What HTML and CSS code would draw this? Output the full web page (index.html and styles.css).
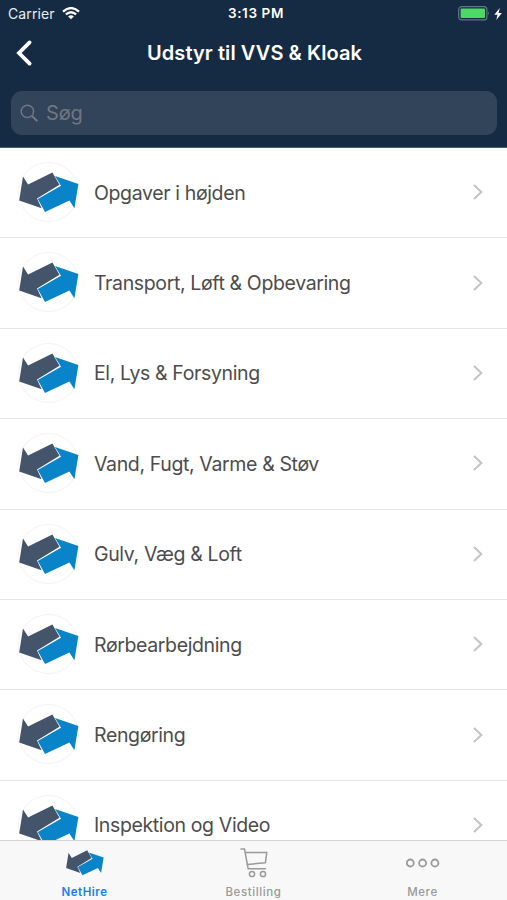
FILE: index.html
```html
<!DOCTYPE html>
<html lang="da">
<head>
<meta charset="utf-8">
<title>Udstyr til VVS &amp; Kloak</title>
<link rel="stylesheet" href="styles.css">
</head>
<body>
<svg class="defs" aria-hidden="true">
  <symbol id="logo" viewBox="18 162 61 60">
    <path fill="#44546a" d="M23 176.4L28.1 184.6L52.4 172.4L59.5 184.8L37 198.4L41.6 208.2L19.2 200.4Z"/>
    <path fill="#0a84c8" d="M55 176L78.4 184L74.4 208.2L69.4 200.4L45 212L37.8 199L61 185.8Z"/>
  </symbol>
  <symbol id="chev" viewBox="0 0 12 18"><path d="M2 2L9.3 9L2 16" fill="none" stroke="#c4c4c8" stroke-width="2"/></symbol>
</svg>
<div class="app">
  <header class="header">
    <div class="status">
      <div class="carrier"><span>Carrier</span>
        <svg class="wifi" viewBox="0 0 18 13"><path d="M1 4.6Q9-2.4 17 4.6M3.9 7.4Q9 3 14.1 7.4" fill="none" stroke="#fff" stroke-width="2.3"/><path d="M9 12.2L6.1 9.4Q9 7.2 11.9 9.4Z" fill="#fff"/></svg>
      </div>
      <div class="time">3:13 PM</div>
      <div class="power">
        <svg class="battery" viewBox="0 0 32 15"><rect x=".7" y=".7" width="28.2" height="13.2" rx="3" fill="none" stroke="#66758a" stroke-width="1.2"/><rect x="2.6" y="2.6" width="24.4" height="9.4" rx="1" fill="#4cd964"/><path d="M30.2 5Q32 7.3 30.2 9.6Z" fill="#66758a"/></svg>
        <svg class="bolt" viewBox="0 0 8 12"><path d="M5.8 0L.3 6.8H3.5L2.3 12L7.8 4.9H4.5Z" fill="#fff"/></svg>
      </div>
    </div>
    <div class="nav">
      <svg class="back" viewBox="0 0 18 28"><path d="M14.6 3.4L4 14L14.6 24.6" fill="none" stroke="#fff" stroke-width="3.8" stroke-linecap="round" stroke-linejoin="miter"/></svg>
      <h1 class="title">Udstyr til VVS &amp; Kloak</h1>
    </div>
    <div class="search">
      <svg class="glass" viewBox="0 0 19 19"><circle cx="7.4" cy="7.4" r="6.2" fill="none" stroke="#717780" stroke-width="1.5"/><path d="M12 12L17.4 17.2" stroke="#717780" stroke-width="2"/></svg>
      <span>Søg</span>
    </div>
  </header>
  <main class="list">
    <div class="row"><div class="avatar"><svg><use href="#logo"/></svg></div><span class="label">Opgaver i højden</span><svg class="chev"><use href="#chev"/></svg></div>
    <div class="row"><div class="avatar"><svg><use href="#logo"/></svg></div><span class="label">Transport, Løft &amp; Opbevaring</span><svg class="chev"><use href="#chev"/></svg></div>
    <div class="row"><div class="avatar"><svg><use href="#logo"/></svg></div><span class="label">El, Lys &amp; Forsyning</span><svg class="chev"><use href="#chev"/></svg></div>
    <div class="row"><div class="avatar"><svg><use href="#logo"/></svg></div><span class="label">Vand, Fugt, Varme &amp; Støv</span><svg class="chev"><use href="#chev"/></svg></div>
    <div class="row"><div class="avatar"><svg><use href="#logo"/></svg></div><span class="label">Gulv, Væg &amp; Loft</span><svg class="chev"><use href="#chev"/></svg></div>
    <div class="row"><div class="avatar"><svg><use href="#logo"/></svg></div><span class="label">Rørbearbejdning</span><svg class="chev"><use href="#chev"/></svg></div>
    <div class="row"><div class="avatar"><svg><use href="#logo"/></svg></div><span class="label">Rengøring</span><svg class="chev"><use href="#chev"/></svg></div>
    <div class="row"><div class="avatar"><svg><use href="#logo"/></svg></div><span class="label">Inspektion og Video</span><svg class="chev"><use href="#chev"/></svg></div>
  </main>
  <nav class="tabs">
    <div class="tab active"><svg class="tab-logo" viewBox="19 172 60 41"><use href="#logo" x="18" y="162" width="61" height="60"/></svg><span>NetHire</span></div>
    <div class="tab"><svg class="cart" viewBox="0 0 28 30"><g fill="none" stroke="#9a9a9a" stroke-width="1.5" stroke-linejoin="round" stroke-linecap="round"><path d="M1 1H4.5L8.2 20.8H25.5M5.4 4.4H26.8L25.4 14.8L7 16.5"/><circle cx="12" cy="26" r="2.6"/><circle cx="23" cy="26" r="2.6"/></g></svg><span>Bestilling</span></div>
    <div class="tab"><svg class="dots" viewBox="0 0 34 30"><g fill="none" stroke="#9a9a9a" stroke-width="1.8"><circle cx="4.3" cy="15" r="3.5"/><circle cx="16.6" cy="15" r="3.5"/><circle cx="28.9" cy="15" r="3.5"/></g></svg><span>Mere</span></div>
  </nav>
</div>
</body>
</html>
```
FILE: styles.css
```css
* { box-sizing: border-box; }
body { margin: 0; font-family: Inter, "Liberation Sans", sans-serif; background: #fff; }
svg { display: block; }
.defs { display: none; }
.app { width: 507px; height: 900px; display: flex; flex-direction: column; overflow: hidden; }
.header { flex: none; height: 148px; background: #152b43; border-bottom: 1px solid #4b5c6d; color: #fff; }
.status { height: 27px; padding: 0 5px 0 8px; display: grid; grid-template-columns: 1fr auto 1fr; align-items: center; font-size: 14px; line-height: 27px; }
.carrier { display: flex; align-items: center; gap: 7px; letter-spacing: .1px; color: #e8edf2; }
.wifi { width: 18px; height: 13px; }
.time { font-weight: 600; font-size: 13.5px; letter-spacing: .6px; padding-left: 2px; }
.power { display: flex; justify-content: flex-end; align-items: center; gap: 4px; }
.battery { width: 32px; height: 15px; }
.bolt { width: 8px; height: 12px; }
.nav { height: 50px; display: grid; grid-template-columns: 50px 1fr 48px; align-items: center; }
.back { width: 18px; height: 28px; margin-left: 15px; }
.title { margin: 0; text-align: center; font-size: 20px; line-height: 52px; font-weight: 600; letter-spacing: .08px; }
.search { margin: 14px 10px 0 11px; height: 44px; border-radius: 11px; background: #32445a; display: flex; align-items: center; gap: 7px; padding-left: 9px; color: #717780; font-size: 20px; letter-spacing: -.2px; }
.glass { width: 19px; height: 19px; }
.list { flex: 1; min-height: 0; overflow: hidden; }
.row { height: 90.4px; border-bottom: 1px solid #e5e5e6; display: flex; align-items: center; padding: 0 23.5px 0 18px; }
.avatar { flex: none; width: 61px; height: 60px; margin-top: -1.2px; border-radius: 50%; box-shadow: inset 0 0 0 1px #f4f4f4; }
.avatar svg { width: 61px; height: 60px; }
.label { flex: 1; margin-left: 15px; font-size: 19.5px; letter-spacing: -.37px; color: #4c4c4e; white-space: nowrap; }
.chev { width: 12px; height: 18px; flex: none; margin-top: -1px; }
.tabs { flex: none; height: 60px; background: #f8f8f8; border-top: 1px solid #d4d4d5; display: grid; grid-template-columns: repeat(3, 1fr); }
.tab { display: flex; flex-direction: column; align-items: center; padding-top: 7px; color: #989898; font-size: 11.5px; line-height: 14px; font-weight: 500; letter-spacing: .6px; }
.tab span { margin-top: 7px; }
.active { color: #1a7fee; font-weight: 600; letter-spacing: .55px; }
.tab-logo { width: 38px; height: 30px; }
.cart { width: 28px; height: 30px; }
.dots { width: 34px; height: 30px; }
```
